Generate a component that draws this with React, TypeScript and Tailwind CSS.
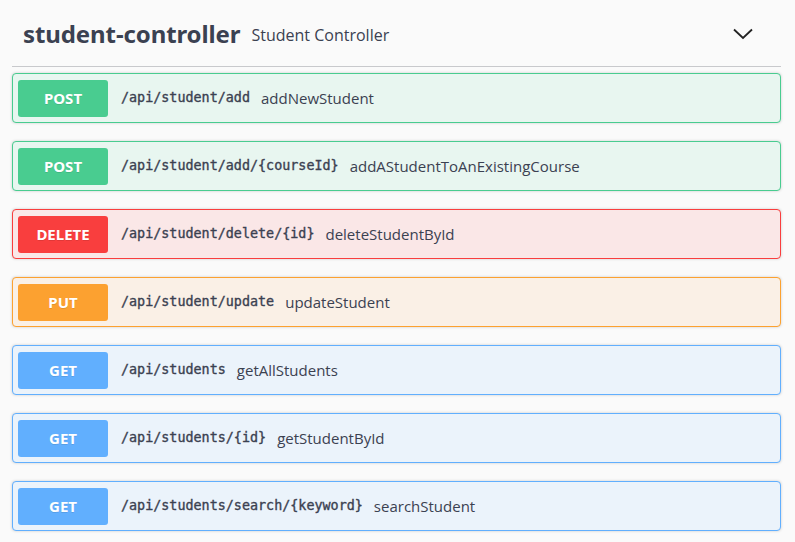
type Method = 'POST' | 'DELETE' | 'PUT' | 'GET';

interface Operation {
  method: Method;
  path: string;
  summary: string;
}

const operations: Operation[] = [
  { method: 'POST', path: '/api/student/add', summary: 'addNewStudent' },
  { method: 'POST', path: '/api/student/add/{courseId}', summary: 'addAStudentToAnExistingCourse' },
  { method: 'DELETE', path: '/api/student/delete/{id}', summary: 'deleteStudentById' },
  { method: 'PUT', path: '/api/student/update', summary: 'updateStudent' },
  { method: 'GET', path: '/api/students', summary: 'getAllStudents' },
  { method: 'GET', path: '/api/students/{id}', summary: 'getStudentById' },
  { method: 'GET', path: '/api/students/search/{keyword}', summary: 'searchStudent' },
];

const blockStyles: Record<Method, { block: string; badge: string }> = {
  POST: { block: 'border-[#49cc90] bg-[#e8f6f0]', badge: 'bg-[#49cc90]' },
  DELETE: { block: 'border-[#f93e3e] bg-[#fae7e7]', badge: 'bg-[#f93e3e]' },
  PUT: { block: 'border-[#fca130] bg-[#faf0e6]', badge: 'bg-[#fca130]' },
  GET: { block: 'border-[#61affe] bg-[#ebf3fb]', badge: 'bg-[#61affe]' },
};

function OpBlock({ op }: { op: Operation }) {
  const s = blockStyles[op.method];
  return (
    <div className={`flex items-center h-[50px] rounded border px-[5px] shadow-[0_0_3px_rgba(0,0,0,0.19)] ${s.block}`}>
      <div
        className={`w-[90px] h-[37px] rounded-[3px] flex items-center justify-center text-white text-[15px] font-bold font-['Noto_Sans',sans-serif] [text-shadow:0_1px_0_rgba(0,0,0,0.1)] ${s.badge}`}
      >
        {op.method}
      </div>
      <span className="ml-[13px] text-[13.4px] font-normal text-[#3b4151] font-['DejaVu_Sans_Mono',monospace] [-webkit-text-stroke:0.35px_#3b4151]">
        {op.path}
      </span>
      <span className="ml-[11px] text-[15px] text-[#3b4151]">{op.summary}</span>
    </div>
  );
}

export default function App() {
  return (
    <div className="min-h-screen bg-[#fafafa] pl-3 pr-[14px] font-['Open_Sans',sans-serif]">
      <div className="flex items-center h-[67px] border-b border-[#c8c9cc] pl-[11px] pr-[28px] pt-[2px]">
        <h3 className="text-[24px] font-bold text-[#3b4151] tracking-[-0.1px] font-['Noto_Sans',sans-serif]">
          student-controller
        </h3>
        <span className="ml-[11px] mt-[1px] text-[16px] text-[#3b4151]">Student Controller</span>
        <svg className="ml-auto" width="20" height="12" viewBox="0 0 20 12" fill="none">
          <polyline points="1,1.5 10,10 19,1.5" stroke="#222" strokeWidth="1.8" />
        </svg>
      </div>
      <div className="mt-[6px] flex flex-col gap-[18px]">
        {operations.map((op, i) => (
          <OpBlock key={i} op={op} />
        ))}
      </div>
    </div>
  );
}
